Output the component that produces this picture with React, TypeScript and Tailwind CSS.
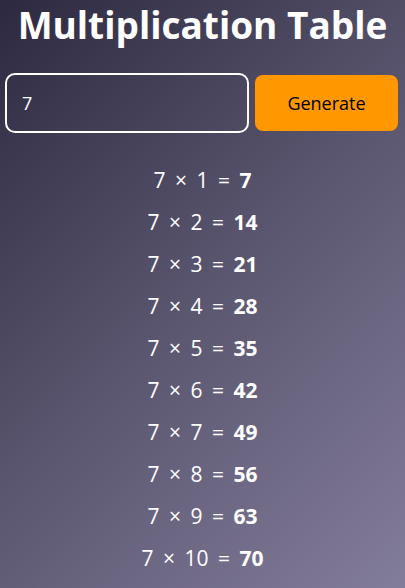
export default function App() {
  const n = 7;
  const rows = Array.from({ length: 10 }, (_, i) => i + 1);

  return (
    <div className="min-h-screen bg-[linear-gradient(135deg,#2c2940_0%,#5b566f_50%,#837d9c_100%)] text-white font-['Open_Sans',sans-serif]">
      {/* Title */}
      <h1 className="pt-[2px] text-center text-[37px] font-bold leading-[46px]">Multiplication Table</h1>

      {/* Input row */}
      <div className="mt-[25px] flex items-center gap-[6px] pl-[5px] pr-[7px]">
        <input
          type="number"
          defaultValue={n}
          className="h-[60px] min-w-0 flex-1 rounded-[10px] border-2 border-white bg-transparent px-[15px] text-[18px] text-white outline-none"
        />
        <button className="h-[56px] w-[143px] rounded-[8px] bg-[#ff9800] text-[18px] text-black">Generate</button>
      </div>

      {/* Results */}
      <div className="mt-[26px] flex flex-col items-center">
        {rows.map((i) => (
          <p key={i} className="text-[21px] leading-[42px] [word-spacing:4px]">
            {n} × {i} = <span className="font-bold">{n * i}</span>
          </p>
        ))}
      </div>
    </div>
  );
}
